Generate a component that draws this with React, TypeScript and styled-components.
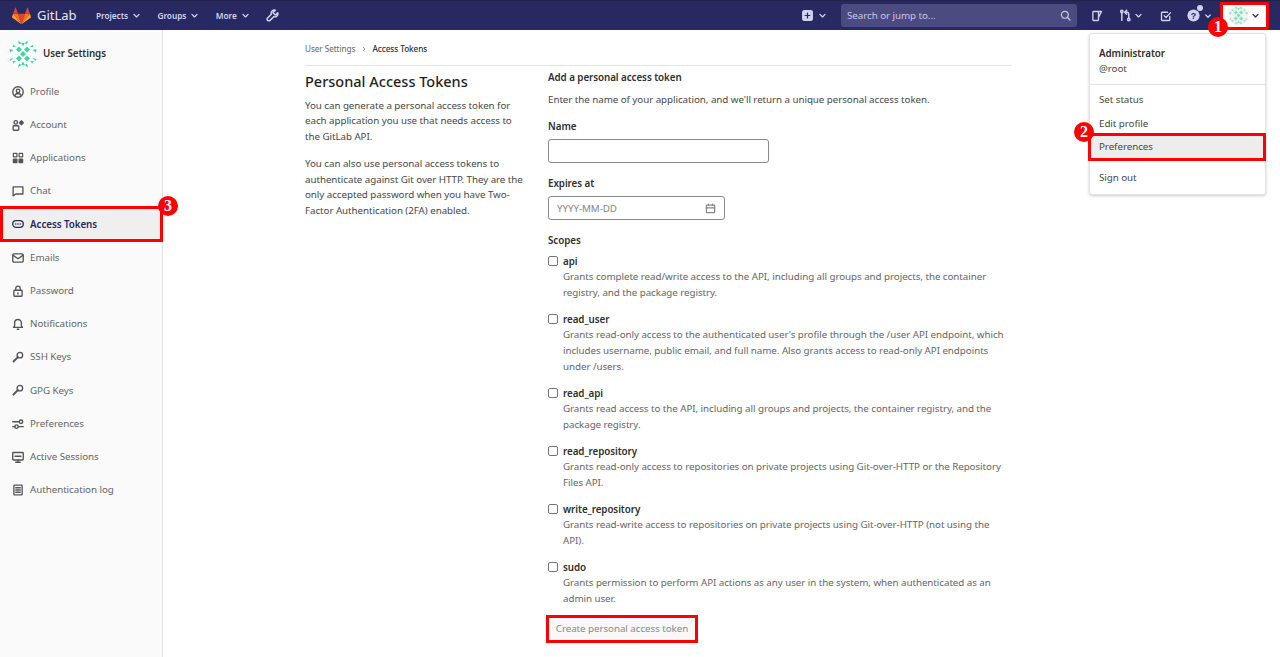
import React from "react";
import styled, { createGlobalStyle } from "styled-components";

const Global = createGlobalStyle`
  html, body { margin: 0; padding: 0; height: 100%; overflow: hidden; background: #fff; }
  body { font-family: "Noto Sans", "Open Sans", sans-serif; font-size: 9.8px; letter-spacing: -0.06px; line-height: 15.4px; color: #484848; }
  * { box-sizing: border-box; }
`;

const Page = styled.div`height: 657px; display: flex; flex-direction: column; position: relative; overflow: hidden;`;
const TopBar = styled.header`
  height: 30px; flex: none; background: #292961; border-top: 1px solid #222248; display: flex; align-items: center; color: #d1d1f0; position: relative;
`;
const Brand = styled.div`display: flex; align-items: center; gap: 6px; margin-left: 12px; color: #e6e6f5; font-size: 13px; letter-spacing: 0; width: 84px;`;
const NavItem = styled.div`display: flex; align-items: center; gap: 4px; font-size: 8.3px; font-weight: 600; color: #d1d1f0; margin-right: 16.5px;`;
const Spacer = styled.div`flex: 1;`;
const Search = styled.div`
  width: 236px; height: 23px; background: #4b4b80; border-radius: 3px; display: flex; align-items: center; justify-content: space-between; padding: 0 6px; color: #c8c8e0; margin: 0 14px;
`;
const IconGroup = styled.div<{ $ml?: number; $gap?: number }>`display: flex; align-items: center; gap: ${p => p.$gap ?? 2}px; margin-left: ${p => p.$ml ?? 0}px; color: #d1d1f0; position: relative;`;
const Dot = styled.span`position: absolute; width: 6px; height: 6px; border-radius: 50%; background: #d1d1f0; left: 10px; top: -4px;`;
const UserBox = styled.div`
  width: 49px; height: 28px; margin: 0 11px 0 8px; background: #fff; border: 3px solid #f00; border-radius: 1px; display: flex; align-items: center; justify-content: center; gap: 3px; color: #292961; position: relative;
`;

const Body = styled.div`flex: 1; display: flex; min-height: 0;`;
const Side = styled.aside`width: 163px; flex: none; background: #fafafa; border-right: 1px solid #e3e3e3;`;
const SideHead = styled.div`height: 45px; padding: 2px 0 0 9px; display: flex; align-items: center; gap: 6px; font-weight: 600; color: #303030;`;
const SideItem = styled.div<{ $active?: boolean }>`
  height: 33.2px; display: flex; align-items: center; gap: 6px; padding-left: 12px; color: ${p => (p.$active ? "#292961" : "#666")}; font-weight: ${p => (p.$active ? 600 : 400)}; position: relative;
  svg { color: ${p => (p.$active ? "#292961" : "#555")}; flex: none; }
  ${p => p.$active ? "background: #efefef; border: 3px solid #f00; padding-left: 9px; height: 36px; margin: -1.4px -1px -1.4px 0;" : ""}
`;
const Main = styled.main`flex: 1; padding-left: 142px; min-width: 0;`;
const Container = styled.div`width: 707px;`;
const Crumbs = styled.div`height: 36px; padding-top: 2px; border-bottom: 1px solid #e5e5e5; display: flex; align-items: center; gap: 5.5px; font-size: 8.2px; color: #666;`;
const CrumbNow = styled.span`color: #303030; font-weight: 500;`;
const Cols = styled.div`display: flex; gap: 23px;`;
const Left = styled.div`width: 220px; flex: none; padding-top: 5px;`;
const Title = styled.h4`margin: 0 0 7px; font-size: 14.5px; line-height: 20px; font-weight: 500; letter-spacing: 0; color: #1f1f1f;`;
const P = styled.p`margin: 0 0 12.2px;`;
const Right = styled.div`flex: 1; padding-top: 4px;`;
const H5 = styled.div`font-weight: 600; line-height: 15px; margin-bottom: 7px; color: #303030;`;
const Intro = styled.div`margin-bottom: 12px;`;
const Label = styled.div<{ $mb?: number }>`font-weight: 600; line-height: 15px; margin-bottom: ${p => p.$mb ?? 5}px; color: #303030;`;
const Field = styled.div<{ $w: number }>`
  width: ${p => p.$w}px; height: 24px; border: 1px solid #89888d; border-radius: 3px; display: flex; align-items: center; justify-content: space-between; padding: 0 8px; color: #868686; margin-bottom: 13px; background: #fff;
`;
const Scope = styled.div`display: flex; gap: 5px; margin-bottom: 11.6px;`;
const Check = styled.span`width: 10px; height: 10px; border: 1px solid #767676; border-radius: 2px; margin-top: 2px; flex: none; background: #fff;`;
const ScopeName = styled.div`font-weight: 600; color: #303030; line-height: 15px;`;
const ScopeText = styled.div`color: #666; line-height: 15.7px; white-space: nowrap;`;
const Submit = styled.div`
  width: 152px; height: 28px; margin: -3.4px 0 0 -2px; border: 3px solid #f00; background: #f8f8f8; color: #8a8a8a; display: flex; align-items: center; justify-content: center;
`;

const Menu = styled.div`
  position: absolute; left: 1089px; top: 33px; width: 177px; height: 162px; background: #fff; border: 1px solid #e3e3e3; border-radius: 3px; box-shadow: 0 1px 3px rgba(0,0,0,.2); padding-top: 4px;
`;
const MenuUser = styled.div`padding: 8px 9px 7px; border-bottom: 1px solid #e3e3e3; height: 47px; margin-bottom: 3px;`;
const MenuName = styled.div`font-weight: 600; line-height: 15px; color: #303030;`;
const MenuItem = styled.div<{ $hi?: boolean; $sep?: boolean }>`
  height: 23.5px; padding-left: 9px; display: flex; align-items: center;
  ${p => p.$hi ? "background: #ededed; border: 3px solid #f00; padding-left: 8px; height: 28px; margin: -2.25px -1px -2.25px -2px; position: relative;" : ""}
  ${p => p.$sep ? "margin-top: 7px;" : ""}
`;
const Badge = styled.span<{ $x: number; $y: number }>`
  position: absolute; left: ${p => p.$x}px; top: ${p => p.$y}px; width: 20px; height: 20px; border-radius: 50%; background: #f00; color: #fff; font: 700 16px/20px "Liberation Serif", serif; text-align: center; letter-spacing: 0;
`;

const I = ({ children, s = 12 }: { children: React.ReactNode; s?: number }) => (
  <svg width={s} height={s} viewBox="0 0 16 16" fill="none" stroke="currentColor" strokeWidth="1.8" strokeLinecap="round" strokeLinejoin="round">{children}</svg>
);
const Chevron = ({ s = 9 }: { s?: number }) => (
  <svg width={s} height={s} viewBox="0 0 16 16" fill="none" stroke="currentColor" strokeWidth="2.4" strokeLinecap="round" strokeLinejoin="round"><path d="M3.5 6l4.5 4.5L12.5 6" /></svg>
);
const Logo = () => (
  <svg width="19" height="18" viewBox="0 0 24 22">
    <path d="M12 21.5L16.4 8H7.6z" fill="#e24329" />
    <path d="M12 21.5L7.6 8H1.4z" fill="#fc6d26" />
    <path d="M1.4 8L.1 12.1c-.1.4 0 .8.4 1L12 21.5z" fill="#fca326" />
    <path d="M1.4 8h6.2L4.9.7c-.1-.4-.7-.4-.8 0z" fill="#e24329" />
    <path d="M12 21.5L16.4 8h6.2z" fill="#fc6d26" />
    <path d="M22.6 8l1.3 4.1c.1.4 0 .8-.4 1L12 21.5z" fill="#fca326" />
    <path d="M22.6 8h-6.2l2.7-7.3c.1-.4.7-.4.8 0z" fill="#e24329" />
  </svg>
);
const Identicon = ({ s, bg = "#fff", tone = "#3fd6a0" }: { s: number; bg?: string; tone?: string }) => (
  <svg width={s} height={s} viewBox="0 0 28 28">
    <circle cx="14" cy="14" r="14" fill={bg} />
    <g fill={tone}>
      <path d="M10 6.500l3 3-3 3-3-3zM18 6.500l3 3-3 3-3-3zM14 11l3 3-3 3-3-3zM10 15.500l3 3-3 3-3-3zM18 15.500l3 3-3 3-3-3z" />
      <path d="M9 .5l3.500 2.500-2.500 1.500zM19 .5l-3.500 2.500 2.500 1.500zM.5 9l4 1-3.500 2.500zM27.500 9l-4 1 3.500 2.500zM.5 19l4-1-3 3zM27.500 19l-4-1 3 3zM9 27.500l3.500-2.500-2.500-1.500zM19 27.500l-3.500-2.500 2.500-1.500zM4.500 4.500l2.500 2.500H3.500zM23.500 4.500l-2.500 2.500h3.500zM4.500 23.500L7 21H3.500zM23.500 23.500L21 21h3.500zM14 21.500l1.800 3.500h-3.600zM14 6.500l1.800-3.500h-3.600z" />
    </g>
  </svg>
);

const sideItems: [string, React.ReactNode][] = [
  ["Profile", <I><circle cx="8" cy="8" r="7" /><circle cx="8" cy="6.500" r="2.300" /><path d="M3.500 12.800c1-2 2.800-2.800 4.500-2.800s3.500.8 4.500 2.800" /></I>],
  ["Account", <I><circle cx="5" cy="4.500" r="2.300" /><rect x="1.500" y="9" width="7.500" height="6" rx="1" /><circle cx="12.500" cy="5" r="2" fill="currentColor" /><path d="M12.500 1.800v6.400M9.300 5h6.400" strokeWidth="1.100" /></I>],
  ["Applications", <I><g strokeWidth="1.600"><rect x="1.800" y="1.800" width="4.800" height="4.800" rx=".5" /><rect x="9.400" y="1.800" width="4.800" height="4.800" rx=".5" /><rect x="1.800" y="9.400" width="4.800" height="4.800" rx=".5" fill="currentColor" /><rect x="9.400" y="9.400" width="4.800" height="4.800" rx=".5" fill="currentColor" /></g></I>],
  ["Chat", <I><path d="M1.500 2.500h13v9.500H5l-3.500 2.500z" /></I>],
  ["Access Tokens", <I><rect x="1" y="3.500" width="14" height="9" rx="4.500" /><path d="M5 8h.01M8 8h.01M11 8h.01" strokeWidth="2.200" /></I>],
  ["Emails", <I><rect x="1" y="2.500" width="14" height="11" rx="1.500" /><path d="M1.500 4.500L8 9l6.500-4.500" /></I>],
  ["Password", <I><rect x="2.500" y="7" width="11" height="8" rx="1" /><path d="M5 7V4.500a3 3 0 016 0V7" /><path d="M8 10.500v1.500" /></I>],
  ["Notifications", <I><path d="M2 12.500h12l-1.500-2V6.500a4.500 4.500 0 00-9 0v4zM7 15h2" /></I>],
  ["SSH Keys", <I><circle cx="10.500" cy="5.500" r="3.700" /><path d="M7.800 8.200L2 14" strokeWidth="2.600" /></I>],
  ["GPG Keys", <I><circle cx="10.500" cy="5.500" r="3.700" /><path d="M7.800 8.200L2 14" strokeWidth="2.600" /></I>],
  ["Preferences", <I><path d="M1 5h8M1 11.500h3" /><circle cx="12" cy="5" r="2.300" /><circle cx="6" cy="11.500" r="2.300" /><path d="M8.500 11.500H15" /></I>],
  ["Active Sessions", <I><rect x="1" y="2" width="14" height="10" rx="1" /><path d="M5 15h6M8 12v3M4 7h8" /></I>],
  ["Authentication log", <I><rect x="2.500" y="1.500" width="11" height="13" rx="1" /><path d="M5 5h6M5 8h6M5 11h6" /></I>],
];

const scopes: [string, string[]][] = [
  ["api", ["Grants complete read/write access to the API, including all groups and projects, the container", "registry, and the package registry."]],
  ["read_user", ["Grants read-only access to the authenticated user's profile through the /user API endpoint, which", "includes username, public email, and full name. Also grants access to read-only API endpoints", "under /users."]],
  ["read_api", ["Grants read access to the API, including all groups and projects, the container registry, and the", "package registry."]],
  ["read_repository", ["Grants read-only access to repositories on private projects using Git-over-HTTP or the Repository", "Files API."]],
  ["write_repository", ["Grants read-write access to repositories on private projects using Git-over-HTTP (not using the", "API)."]],
  ["sudo", ["Grants permission to perform API actions as any user in the system, when authenticated as an", "admin user."]],
];

export default function App() {
  return (
    <Page>
      <Global />
      <TopBar>
        <Brand><Logo />GitLab</Brand>
        <NavItem>Projects <Chevron /></NavItem>
        <NavItem>Groups <Chevron /></NavItem>
        <NavItem>More <Chevron /></NavItem>
        <IconGroup><I s={13}><path d="M14.500 4.500L11.500 7.500 8.500 4.500l3-3a4 4 0 00-5 5L2 11a2 2 0 003 3l4.500-4.500a4 4 0 005-5z" /></I></IconGroup>
        <Spacer />
        <IconGroup $gap={5}><I s={11}><rect x="1" y="1" width="14" height="14" rx="2" fill="currentColor" /><path d="M8 4.500v7M4.500 8h7" stroke="#292961" /></I><Chevron /></IconGroup>
        <Search>Search or jump to...<I s={11}><circle cx="7" cy="7" r="5" /><path d="M11 11l3.500 3.500" /></I></Search>
        <IconGroup><I s={12}><path d="M2.500 3a1 1 0 011-1H14l-4 8v3a1 1 0 01-1 1H3.500a1 1 0 01-1-1zM10 2v8" /></I></IconGroup>
        <IconGroup $ml={16}><I s={13}><circle cx="3.500" cy="3" r="1.500" /><path d="M3.500 5v9" /><circle cx="12" cy="13" r="1.500" /><path d="M12 11V6a2 2 0 00-2-2H8M9.500 1.500L7 4l2.500 2.500" /></I><Chevron /></IconGroup>
        <IconGroup $ml={17}><I s={12}><path d="M13 8.500V13a1 1 0 01-1 1H3a1 1 0 01-1-1V4a1 1 0 011-1h7" /><path d="M5.500 7.500L8 10l6-6.500" /></I></IconGroup>
        <IconGroup $ml={15} $gap={4}><svg width="13" height="13" viewBox="0 0 16 16"><circle cx="8" cy="8" r="7.500" fill="currentColor" /><text x="8" y="12" textAnchor="middle" fontSize="11" fontWeight="700" fontFamily="Liberation Sans" fill="#292961">?</text></svg><Dot /><Chevron s={8} /></IconGroup>
        <UserBox><Identicon s={19} bg="#eef4f2" tone="#7be2bd" /><Chevron /></UserBox>
      </TopBar>
      <Body>
        <Side>
          <SideHead><Identicon s={28} />User Settings</SideHead>
          {sideItems.map(([name, icon]) => (
            <SideItem key={name} $active={name === "Access Tokens"}>{icon}{name}</SideItem>
          ))}
        </Side>
        <Main>
          <Container>
            <Crumbs><span>User Settings</span><svg width="6" height="6" viewBox="0 0 6 6" fill="none" stroke="#777" strokeWidth=".8"><path d="M2 1l2 2-2 2" /></svg><CrumbNow>Access Tokens</CrumbNow></Crumbs>
            <Cols>
              <Left>
                <Title>Personal Access Tokens</Title>
                <P>You can generate a personal access token for each application you use that needs access to the GitLab API.</P>
                <P>You can also use personal access tokens to authenticate against Git over HTTP. They are the only accepted password when you have Two-Factor Authentication (2FA) enabled.</P>
              </Left>
              <Right>
                <H5>Add a personal access token</H5>
                <Intro>Enter the name of your application, and we'll return a unique personal access token.</Intro>
                <Label>Name</Label>
                <Field $w={221} />
                <Label>Expires at</Label>
                <Field $w={177}>YYYY-MM-DD<I s={11}><rect x="2" y="3" width="12" height="11" rx="1" /><path d="M2 7h12M5 1.500V3M11 1.500V3" /></I></Field>
                <Label $mb={6}>Scopes</Label>
                {scopes.map(([name, lines]) => (
                  <Scope key={name}>
                    <Check />
                    <div>
                      <ScopeName>{name}</ScopeName>
                      {lines.map(l => <ScopeText key={l}>{l}</ScopeText>)}
                    </div>
                  </Scope>
                ))}
                <Submit>Create personal access token</Submit>
              </Right>
            </Cols>
          </Container>
        </Main>
      </Body>
      <Menu>
        <MenuUser><MenuName>Administrator</MenuName><div>@root</div></MenuUser>
        <MenuItem>Set status</MenuItem>
        <MenuItem>Edit profile</MenuItem>
        <MenuItem $hi>Preferences</MenuItem>
        <MenuItem $sep>Sign out</MenuItem>
      </Menu>
      <Badge $x={1208} $y={17}>1</Badge>
      <Badge $x={1074} $y={122}>2</Badge>
      <Badge $x={158} $y={196}>3</Badge>
    </Page>
  );
}
